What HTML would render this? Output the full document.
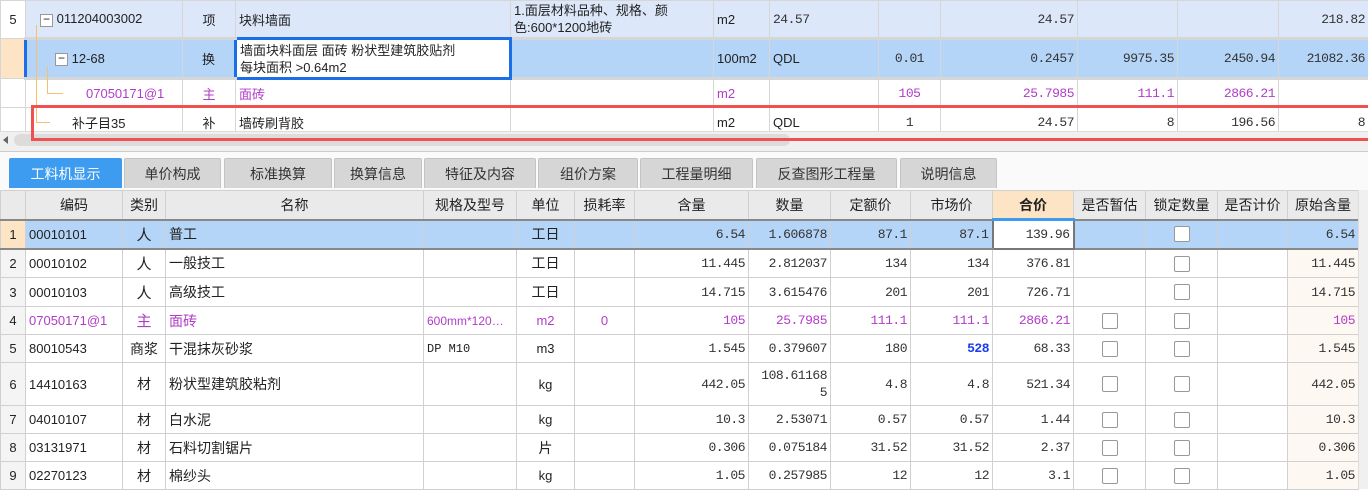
<!DOCTYPE html>
<html><head><meta charset="utf-8"><style>
*{margin:0;padding:0;box-sizing:border-box}
body{width:1368px;height:489px;overflow:hidden;background:#fff;font-family:"Liberation Sans","Noto Sans CJK SC",sans-serif;font-size:13px;color:#222;position:relative}
table{border-collapse:collapse;table-layout:fixed;position:absolute;left:0}
td{border:1px solid #d0d0d0;padding:0 3px;white-space:nowrap;overflow:hidden;vertical-align:middle}
.n{font-family:"Liberation Mono","Noto Sans CJK SC",monospace;font-size:13px;text-align:right;letter-spacing:-0.5px;color:#333}
.c{text-align:center}
.p{color:#b03cc8}
#top td{border-color:#d6d6d6}
.r1 td{background:#dce8fa}
.r2 td{background:#b5d5f8;border-top:3px solid #1a6fe8;border-bottom:3px solid #1a6fe8}
.hdr td{background:#eaeaea;text-align:center;font-size:14px}
.sel td{background:#b5d5f8;border-top:2px solid #888;border-bottom:2px solid #888}
.rn{background:#f4f4f4;text-align:center;font-size:13px}
.orig{background:#fdf8f2!important}
.cb{display:inline-block;width:16px;height:16px;border:1px solid #999;border-radius:2px;background:#fff;vertical-align:middle}
.tab{position:absolute;top:158px;height:30px;background:#d6d6d6;border:1px solid #c4c4c4;border-bottom:none;font-size:14px;text-align:center;line-height:30px;color:#333;border-radius:2px 2px 0 0}
.ln{position:absolute;background:#f5c070}
</style></head><body>
<table id="top" style="top:0;width:1368px">
<colgroup><col style="width:25px"><col style="width:157px"><col style="width:53px"><col style="width:275px"><col style="width:203px"><col style="width:56px"><col style="width:109px"><col style="width:62px"><col style="width:137px"><col style="width:100px"><col style="width:101px"><col style="width:90px"></colgroup>
<tr class="r1" style="height:38px"><td class="c" style="background:#fff">5</td><td style="padding-left:14px"><span class="cb" style="width:13px;height:13px;border-radius:0;text-align:center;line-height:9px;font-size:12px">−</span> 011204003002</td><td class="c">项</td><td>块料墙面</td><td style="font-size:13px;line-height:17px;vertical-align:top;padding-top:1px">1.面层材料品种、规格、颜<br>色:600*1200地砖</td><td>m2</td><td class="n" style="text-align:left">24.57</td><td></td><td class="n">24.57</td><td></td><td></td><td class="n">218.82</td></tr>
<tr class="r2" style="height:40px"><td style="background:#fde4c4;border-top:1px solid #d6d6d6;border-bottom:1px solid #d6d6d6"></td><td style="padding-left:28px;border-left:3px solid #1a6fe8"><span class="cb" style="width:13px;height:13px;border-radius:0;text-align:center;line-height:9px;font-size:12px">−</span> 12-68</td><td class="c">换</td><td style="background:#fff;border:3px solid #1a6fe8;line-height:17px">墙面块料面层 面砖 粉状型建筑胶贴剂<br>每块面积 &gt;0.64m2</td><td></td><td>100m2</td><td>QDL</td><td class="n c" style="text-align:center">0.01</td><td class="n">0.2457</td><td class="n">9975.35</td><td class="n">2450.94</td><td class="n">21082.36</td></tr>
<tr style="height:29px"><td></td><td class="p" style="padding-left:60px;font-size:13px">07050171@1</td><td class="c p">主</td><td class="p">面砖</td><td></td><td class="p">m2</td><td></td><td class="n p" style="text-align:center">105</td><td class="n p">25.7985</td><td class="n p">111.1</td><td class="n p">2866.21</td><td></td></tr>
<tr style="height:29px"><td></td><td style="padding-left:46px">补子目35</td><td class="c">补</td><td>墙砖刷背胶</td><td></td><td>m2</td><td>QDL</td><td class="n" style="text-align:center">1</td><td class="n">24.57</td><td class="n">8</td><td class="n">196.56</td><td class="n">8</td></tr>
</table>
<div class="ln" style="left:36px;top:25px;width:1px;height:98px"></div>
<div class="ln" style="left:36px;top:122px;width:14px;height:1px"></div>
<div class="ln" style="left:47px;top:66px;width:1px;height:28px"></div>
<div class="ln" style="left:47px;top:93px;width:16px;height:1px"></div>
<div style="position:absolute;left:0;top:131px;width:1368px;height:20px;background:#f0f0f0;border-top:1px solid #ddd"></div>
<div style="position:absolute;left:14px;top:134px;width:776px;height:12px;background:#dcdcdc;border-radius:6px"></div>
<div style="position:absolute;left:3px;top:136px;width:0;height:0;border-top:4px solid transparent;border-bottom:4px solid transparent;border-right:5px solid #666"></div>
<div style="position:absolute;left:31px;top:105px;width:1340px;height:36px;border:3px solid #f05050"></div>
<div style="position:absolute;left:0;top:151px;width:1368px;height:39px;background:#fafafa;border-top:1px solid #ccc"></div>
<div class="tab" style="left:9px;width:113px;background:#3d9cf0;color:#fff;border-color:#3d9cf0">工料机显示</div>
<div class="tab" style="left:124px;width:97px">单价构成</div>
<div class="tab" style="left:224px;width:108px">标准换算</div>
<div class="tab" style="left:334px;width:88px">换算信息</div>
<div class="tab" style="left:424px;width:112px">特征及内容</div>
<div class="tab" style="left:538px;width:100px">组价方案</div>
<div class="tab" style="left:640px;width:113px">工程量明细</div>
<div class="tab" style="left:756px;width:141px">反查图形工程量</div>
<div class="tab" style="left:900px;width:97px">说明信息</div>
<table style="top:190px;width:1358px">
<colgroup><col style="width:25px"><col style="width:97px"><col style="width:43px"><col style="width:258px"><col style="width:93px"><col style="width:58px"><col style="width:60px"><col style="width:114px"><col style="width:82px"><col style="width:80px"><col style="width:82px"><col style="width:81px"><col style="width:72px"><col style="width:72px"><col style="width:70px"><col style="width:71px"></colgroup>
<tr class="hdr" style="height:29px"><td></td><td>编码</td><td>类别</td><td>名称</td><td>规格及型号</td><td>单位</td><td>损耗率</td><td>含量</td><td>数量</td><td>定额价</td><td>市场价</td><td style="background:#fde4c4;font-weight:bold;border-bottom:3px solid #3d9cf0">合价</td><td>是否暂估</td><td>锁定数量</td><td>是否计价</td><td>原始含量</td></tr>
<tr class="sel" style="height:29px"><td class="rn" style="background:#fde4c4">1</td><td>00010101</td><td class="c" style="font-size:15px">人</td><td style="font-size:14px">普工</td><td></td><td class="c" style="font-size:14px">工日</td><td></td><td class="n">6.54</td><td class="n">1.606878</td><td class="n">87.1</td><td class="n">87.1</td><td class="n" style="background:#fff;border:2px solid #777">139.96</td><td></td><td class="c"><span class="cb"></span></td><td></td><td class="n">6.54</td></tr>
<tr style="height:29px"><td class="rn">2</td><td>00010102</td><td class="c" style="font-size:15px">人</td><td style="font-size:14px">一般技工</td><td></td><td class="c" style="font-size:14px">工日</td><td></td><td class="n">11.445</td><td class="n">2.812037</td><td class="n">134</td><td class="n">134</td><td class="n">376.81</td><td></td><td class="c"><span class="cb"></span></td><td></td><td class="n orig">11.445</td></tr>
<tr style="height:29px"><td class="rn">3</td><td>00010103</td><td class="c" style="font-size:15px">人</td><td style="font-size:14px">高级技工</td><td></td><td class="c" style="font-size:14px">工日</td><td></td><td class="n">14.715</td><td class="n">3.615476</td><td class="n">201</td><td class="n">201</td><td class="n">726.71</td><td></td><td class="c"><span class="cb"></span></td><td></td><td class="n orig">14.715</td></tr>
<tr style="height:28px"><td class="rn">4</td><td class="p">07050171@1</td><td class="c p" style="font-size:15px">主</td><td class="p" style="font-size:14px">面砖</td><td class="p" style="font-size:12px">600mm*120…</td><td class="c p">m2</td><td class="c p">0</td><td class="n p">105</td><td class="n p">25.7985</td><td class="n p">111.1</td><td class="n p">111.1</td><td class="n p">2866.21</td><td class="c"><span class="cb"></span></td><td class="c"><span class="cb"></span></td><td></td><td class="n p orig">105</td></tr>
<tr style="height:28px"><td class="rn">5</td><td>80010543</td><td class="c" style="font-size:14px">商浆</td><td style="font-size:14px">干混抹灰砂浆</td><td style="font-family:'Liberation Mono',monospace;font-size:12px">DP M10</td><td class="c">m3</td><td></td><td class="n">1.545</td><td class="n">0.379607</td><td class="n">180</td><td class="n" style="color:#1a3cf0;font-weight:bold">528</td><td class="n">68.33</td><td class="c"><span class="cb"></span></td><td class="c"><span class="cb"></span></td><td></td><td class="n orig">1.545</td></tr>
<tr style="height:43px"><td class="rn">6</td><td>14410163</td><td class="c" style="font-size:14px">材</td><td style="font-size:14px">粉状型建筑胶粘剂</td><td></td><td class="c">kg</td><td></td><td class="n">442.05</td><td class="n" style="white-space:normal;line-height:17px">108.61168 5</td><td class="n">4.8</td><td class="n">4.8</td><td class="n">521.34</td><td class="c"><span class="cb"></span></td><td class="c"><span class="cb"></span></td><td></td><td class="n orig">442.05</td></tr>
<tr style="height:28px"><td class="rn">7</td><td>04010107</td><td class="c" style="font-size:14px">材</td><td style="font-size:14px">白水泥</td><td></td><td class="c">kg</td><td></td><td class="n">10.3</td><td class="n">2.53071</td><td class="n">0.57</td><td class="n">0.57</td><td class="n">1.44</td><td class="c"><span class="cb"></span></td><td class="c"><span class="cb"></span></td><td></td><td class="n orig">10.3</td></tr>
<tr style="height:28px"><td class="rn">8</td><td>03131971</td><td class="c" style="font-size:14px">材</td><td style="font-size:14px">石料切割锯片</td><td></td><td class="c" style="font-size:14px">片</td><td></td><td class="n">0.306</td><td class="n">0.075184</td><td class="n">31.52</td><td class="n">31.52</td><td class="n">2.37</td><td class="c"><span class="cb"></span></td><td class="c"><span class="cb"></span></td><td></td><td class="n orig">0.306</td></tr>
<tr style="height:28px"><td class="rn">9</td><td>02270123</td><td class="c" style="font-size:14px">材</td><td style="font-size:14px">棉纱头</td><td></td><td class="c">kg</td><td></td><td class="n">1.05</td><td class="n">0.257985</td><td class="n">12</td><td class="n">12</td><td class="n">3.1</td><td class="c"><span class="cb"></span></td><td class="c"><span class="cb"></span></td><td></td><td class="n orig">1.05</td></tr>
</table>
<div style="position:absolute;left:1358px;top:190px;width:10px;height:299px;background:#f0f0f0;border-left:1px solid #ddd"></div>
</body></html>
